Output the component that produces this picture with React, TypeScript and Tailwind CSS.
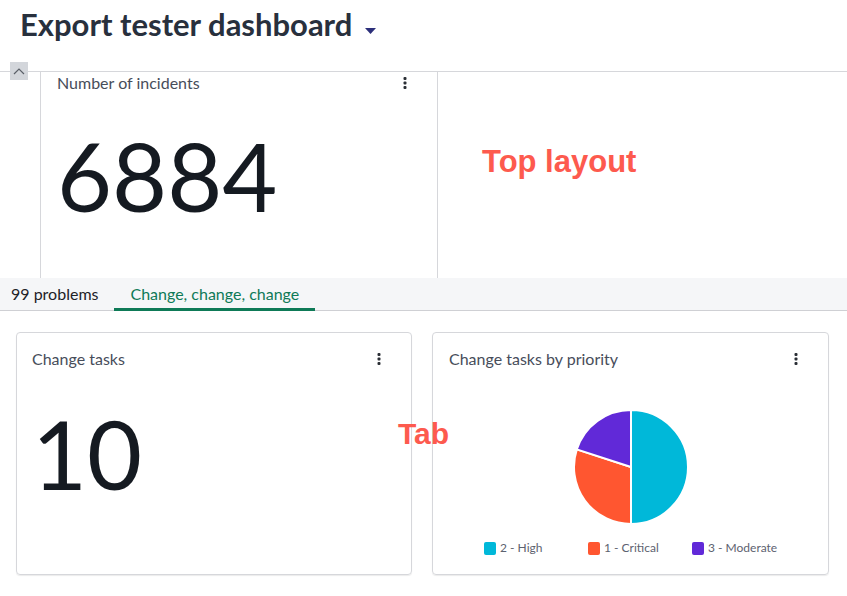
import React from "react";

const lato = { fontFamily: "Lato, 'Open Sans', sans-serif" };

function DotsIcon() {
  return (
    <svg width="4" height="12" viewBox="0 0 4 12" className="text-[#2a2e35]">
      <rect x="0.5" y="0" width="3" height="3" rx="1" fill="currentColor" />
      <rect x="0.5" y="4.5" width="3" height="3" rx="1" fill="currentColor" />
      <rect x="0.5" y="9" width="3" height="3" rx="1" fill="currentColor" />
    </svg>
  );
}

function PieChart() {
  const r = 57;
  const a = (288 * Math.PI) / 180;
  const px = (r * Math.sin(a)).toFixed(2);
  const py = (-r * Math.cos(a)).toFixed(2);
  return (
    <svg width="120" height="120" viewBox="-60 -60 120 120">
      <path d={`M0 0 L0 ${-r} A${r} ${r} 0 0 1 0 ${r} Z`} fill="#00b8d9" stroke="#fff" strokeWidth="2" />
      <path d={`M0 0 L0 ${r} A${r} ${r} 0 0 1 ${px} ${py} Z`} fill="#ff5630" stroke="#fff" strokeWidth="2" />
      <path d={`M0 0 L${px} ${py} A${r} ${r} 0 0 1 0 ${-r} Z`} fill="#6129d8" stroke="#fff" strokeWidth="2" />
    </svg>
  );
}

const legend = [
  { label: "2 - High", color: "bg-[#00b8d9]" },
  { label: "1 - Critical", color: "bg-[#ff5630]" },
  { label: "3 - Moderate", color: "bg-[#6129d8]" },
];

export default function App() {
  return (
    <div className="relative w-[847px] h-[596px] bg-white overflow-hidden" style={lato}>
      {/* header */}
      <div className="h-[71px] pl-[20px] pt-[6px] flex items-start">
        <h1 className="text-[31px] leading-[37px] font-bold text-[#28303d]">
          Export tester dashboard
        </h1>
        <svg width="11" height="6" viewBox="0 0 11 6" className="ml-[13px] mt-[22px]">
          <path d="M0 0 H11 L5.5 6 Z" fill="#2c2f7a" />
        </svg>
      </div>

      {/* top layout */}
      <div className="relative h-[207px] border-t border-[#d6d7db] flex">
        <button className="absolute left-[10px] top-[-10px] w-[18px] h-[18px] bg-[#d3d6db] flex items-center justify-center">
          <svg width="12" height="7" viewBox="0 0 12 7">
            <path d="M1 6 L6 1 L11 6" fill="none" stroke="#5b6068" strokeWidth="1.2" />
          </svg>
        </button>
        <div className="ml-[40px] w-[398px] border-l border-r border-[#d6d7db] flex flex-col">
          <div className="flex items-center justify-between pl-[16px] pr-[30px] pt-[1px] h-[21px]">
            <span className="text-[16px] leading-[20px] text-[#474d5a]">Number of incidents</span>
            <DotsIcon />
          </div>
          <div className="pl-[16px] mt-[35px] text-[95px] leading-[95px] text-[#151a21]">6884</div>
        </div>
        <div className="pl-[44px] pt-[72px]">
          <span
            className="text-[31px] leading-[36px] font-bold text-[#fd5a4e]"
            style={{ fontFamily: "'Liberation Sans', Arial, sans-serif" }}
          >
            Top layout
          </span>
        </div>
      </div>

      {/* tabs */}
      <div className="h-[33px] bg-[#f5f6f8] border-b border-[#cfd0d4] flex items-stretch text-[16px]">
        <div className="pl-[11px] pr-[16px] flex items-center text-[#1e2227]">99 problems</div>
        <div className="px-[16px] flex items-center text-[#0e7a57] border-b-[3px] border-[#0e7a57] pt-[2px] -mb-[1px]">
          Change, change, change
        </div>
      </div>

      {/* tab content */}
      <div className="flex gap-[20px] pl-[16px] pt-[21px]">
        <div className="w-[396px] h-[243px] border border-[#d6d7db] rounded-[4px] shadow-[0_1px_1px_rgba(0,0,0,0.08)] flex flex-col">
          <div className="flex items-center justify-between pl-[15px] pr-[30px] pt-[14px] h-[38px]">
            <span className="text-[16px] leading-[20px] text-[#474d5a]">Change tasks</span>
            <DotsIcon />
          </div>
          <div className="pl-[15px] mt-[35px] text-[95px] leading-[95px] text-[#151a21]">10</div>
        </div>
        <div className="w-[397px] h-[243px] border border-[#d6d7db] rounded-[4px] shadow-[0_1px_1px_rgba(0,0,0,0.08)] flex flex-col">
          <div className="flex items-center justify-between pl-[16px] pr-[30px] pt-[14px] h-[38px]">
            <span className="text-[16px] leading-[20px] text-[#474d5a]">Change tasks by priority</span>
            <DotsIcon />
          </div>
          <div className="flex justify-center mt-[36px]">
            <PieChart />
          </div>
          <div className="flex pl-[51px] mt-[13px]">
            {legend.map((l) => (
              <div key={l.label} className="w-[104px] flex items-center gap-[4px]">
                <span className={`w-[12px] h-[13px] rounded-[2px] ${l.color}`} />
                <span className="text-[12px] leading-[16px] text-[#5d6270]">{l.label}</span>
              </div>
            ))}
          </div>
        </div>
      </div>

      {/* annotation */}
      <span
        className="absolute left-[398px] top-[417px] text-[30px] leading-[34px] font-bold text-[#fd5a4e]"
        style={{ fontFamily: "'Liberation Sans', Arial, sans-serif" }}
      >
        Tab
      </span>
    </div>
  );
}
